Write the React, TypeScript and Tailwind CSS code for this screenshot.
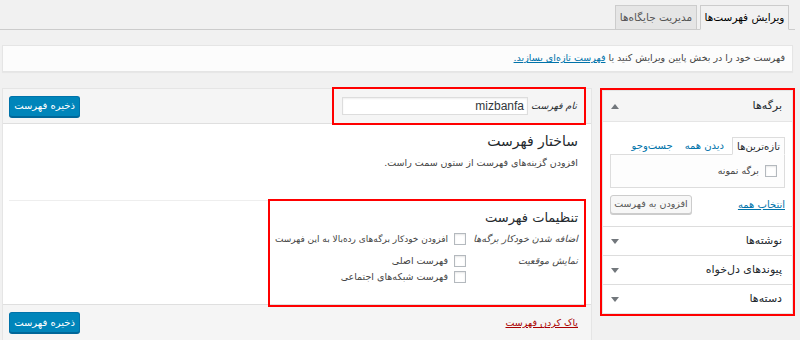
import React from "react";

function Checkbox() {
  return (
    <span className="inline-block w-[12px] h-[12px] shrink-0 bg-white border border-[#b4b9be] shadow-[inset_0_1px_2px_rgba(0,0,0,0.1)]" />
  );
}

function Tri({ up }: { up?: boolean }) {
  return (
    <svg width="8" height="5" viewBox="0 0 8 5" className="shrink-0">
      {up ? <polygon points="0,5 8,5 4,0" fill="#72777c" /> : <polygon points="0,0 8,0 4,5" fill="#72777c" />}
    </svg>
  );
}

function BlueButton() {
  return (
    <button className="w-[71px] h-[21px] rounded-[3px] bg-[#0085ba] border border-[#0073aa] border-b-[#006799] shadow-[0_1px_0_#006799] text-white text-[10px] leading-none flex items-center justify-center whitespace-nowrap">
      ذخیره فهرست
    </button>
  );
}

export default function App() {
  return (
    <div
      dir="rtl"
      className="w-[800px] h-[340px] overflow-hidden bg-[#f1f1f1] text-[#444] text-[11px] font-['DejaVu_Sans',sans-serif]"
    >
      {/* Tabs */}
      <div className="mt-[5px] mr-[5px] h-[25px] border-b border-[#ccc] flex items-end pr-[6px] gap-[3px]">
        <div className="h-[25px] -mb-px w-[89px] border border-[#ccc] border-b-[#f1f1f1] bg-[#f1f1f1] text-[10.5px] text-[#000] flex items-center justify-center whitespace-nowrap">
          ویرایش فهرست‌ها
        </div>
        <div className="h-[25px] -mb-px w-[82px] border border-[#ccc] bg-[#e5e5e5] text-[10.5px] text-[#555] flex items-center justify-center whitespace-nowrap">
          مدیریت جایگاه‌ها
        </div>
      </div>

      {/* Notice */}
      <div className="mt-[15px] ml-[2px] mr-[7px] h-[27px] bg-[#fcfcfc] border border-[#e5e5e5] shadow-[0_1px_1px_rgba(0,0,0,0.04)] flex items-center pr-[7px] text-[9.5px] text-[#444]">
        <span className="whitespace-nowrap">
          فهرست خود را در بخش پایین ویرایش کنید یا{" "}
          <span className="text-[#0073aa] underline">فهرست تازه‌ای بسازید.</span>
        </span>
      </div>

      {/* Main */}
      <div className="mt-[16px] flex items-start">
        {/* Right column */}
        <div className="mr-[5px] w-[195px] border-2 border-[#ff0000] shrink-0">
          <div className="border border-[#e5e5e5] bg-white">
            <div className="h-[31px] bg-[#f5f5f5] border-b border-[#e5e5e5] flex items-center justify-between pr-[10px] pl-[8px]">
              <span className="text-[11px] text-[#23282d]">برگه‌ها</span>
              <Tri up />
            </div>
            <div className="pt-[15px] pb-[12px] px-[7px]">
              <div className="flex items-end h-[17px]">
                <div className="h-[18px] -mb-px px-[4px] border border-[#ddd] border-b-[#fdfdfd] bg-[#fdfdfd] text-[10px] text-[#23282d] flex items-center whitespace-nowrap">
                  تازه‌ترین‌ها
                </div>
                <div className="h-[17px] px-[8px] text-[10px] text-[#0073aa] flex items-center whitespace-nowrap">
                  دیدن همه
                </div>
                <div className="h-[17px] px-[4px] text-[10px] text-[#0073aa] flex items-center whitespace-nowrap">
                  جست‌وجو
                </div>
              </div>
              <div className="h-[34px] border border-[#ddd] bg-[#fdfdfd] flex items-center pr-[7px] gap-[6px]">
                <Checkbox />
                <span className="text-[9.5px] text-[#444]">برگه نمونه</span>
              </div>
              <div className="mt-[7px] flex items-center justify-between">
                <span className="text-[10px] text-[#0073aa] underline whitespace-nowrap">انتخاب همه</span>
                <button className="w-[82px] h-[19px] rounded-[3px] bg-[#f7f7f7] border border-[#ccc] shadow-[0_1px_0_#ccc] text-[9.5px] text-[#555] flex items-center justify-center whitespace-nowrap">
                  افزودن به فهرست
                </button>
              </div>
            </div>
            {["نوشته‌ها", "پیوندهای دل‌خواه", "دسته‌ها"].map((t) => (
              <div
                key={t}
                className="h-[29px] border-t border-[#ddd] flex items-center justify-between pr-[10px] pl-[8px]"
              >
                <span className="text-[11px] text-[#23282d]">{t}</span>
                <Tri />
              </div>
            ))}
          </div>
        </div>

        {/* Left column */}
        <div className="mr-[8px] w-[590px] shrink-0 border border-[#e5e5e5] bg-white flex flex-col">
          {/* header */}
          <div className="h-[35px] bg-[#f5f5f5] border-b border-[#dfdfdf] flex items-center justify-between pr-[5px] pl-[6px]">
            <div className="h-[38px] w-[254px] border-2 border-[#ff0000] flex items-center pr-[7px] gap-[5px] relative z-10">
              <span className="w-[44px] shrink-0 text-[9.5px] italic text-[#23282d] whitespace-nowrap">نام فهرست</span>
              <div className="w-[186px] h-[18px] shrink-0 bg-white border border-[#ddd] shadow-[inset_0_1px_2px_rgba(0,0,0,0.07)] flex items-center pr-[3px] text-[12px] text-[#32373c] font-['Liberation_Sans',sans-serif]">
                mizbanfa
              </div>
            </div>
            <BlueButton />
          </div>

          {/* body */}
          <div className="h-[180px] pr-[5px] pl-[6px] flex flex-col">
            <div className="mt-[9px] pr-[8px] h-[17px] text-[14px] leading-[17px] text-[#23282d] whitespace-nowrap">
              ساختار فهرست
            </div>
            <div className="mt-[6px] pr-[8px] h-[14px] leading-[14px] text-[9.5px] text-[#444] whitespace-nowrap">
              افزودن گزینه‌های فهرست از ستون سمت راست.
            </div>
            <div className="mt-[30px] h-px bg-[#eee] shrink-0" />
            <div className="-mt-[2px] w-[318px] h-[108px] shrink-0 border-2 border-[#ff0000] relative z-10 pr-[6px]">
              <div className="mt-[9px] h-[16px] leading-[16px] text-[13px] text-[#23282d] whitespace-nowrap">
                تنظیمات فهرست
              </div>
              <div className="mt-[6px] flex items-center">
                <div className="w-[112px] shrink-0 text-[9.5px] italic text-[#444] leading-[14px] whitespace-nowrap">
                  اضافه شدن خودکار برگه‌ها
                </div>
                <div className="flex items-center gap-[6px]">
                  <Checkbox />
                  <span className="text-[9px] leading-[14px] whitespace-nowrap">افزودن خودکار برگه‌های رده‌بالا به این فهرست</span>
                </div>
              </div>
              <div className="mt-[8px] flex items-start">
                <div className="w-[112px] shrink-0 text-[9.5px] italic text-[#444] leading-[14px] whitespace-nowrap">
                  نمایش موقعیت
                </div>
                <div className="flex flex-col gap-[2px]">
                  <div className="flex items-center gap-[6px]">
                    <Checkbox />
                    <span className="text-[9.5px] leading-[14px] whitespace-nowrap">فهرست اصلی</span>
                  </div>
                  <div className="flex items-center gap-[6px]">
                    <Checkbox />
                    <span className="text-[9.5px] leading-[14px] whitespace-nowrap">فهرست شبکه‌های اجتماعی</span>
                  </div>
                </div>
              </div>
            </div>
          </div>

          {/* footer */}
          <div className="h-[40px] bg-[#f5f5f5] border-t border-[#dfdfdf] flex items-start justify-between pr-[13px] pl-[6px] pt-[7px]">
            <span className="mt-[4px] text-[9.5px] text-[#a00] underline whitespace-nowrap">پاک کردن فهرست</span>
            <BlueButton />
          </div>
        </div>
      </div>
    </div>
  );
}
